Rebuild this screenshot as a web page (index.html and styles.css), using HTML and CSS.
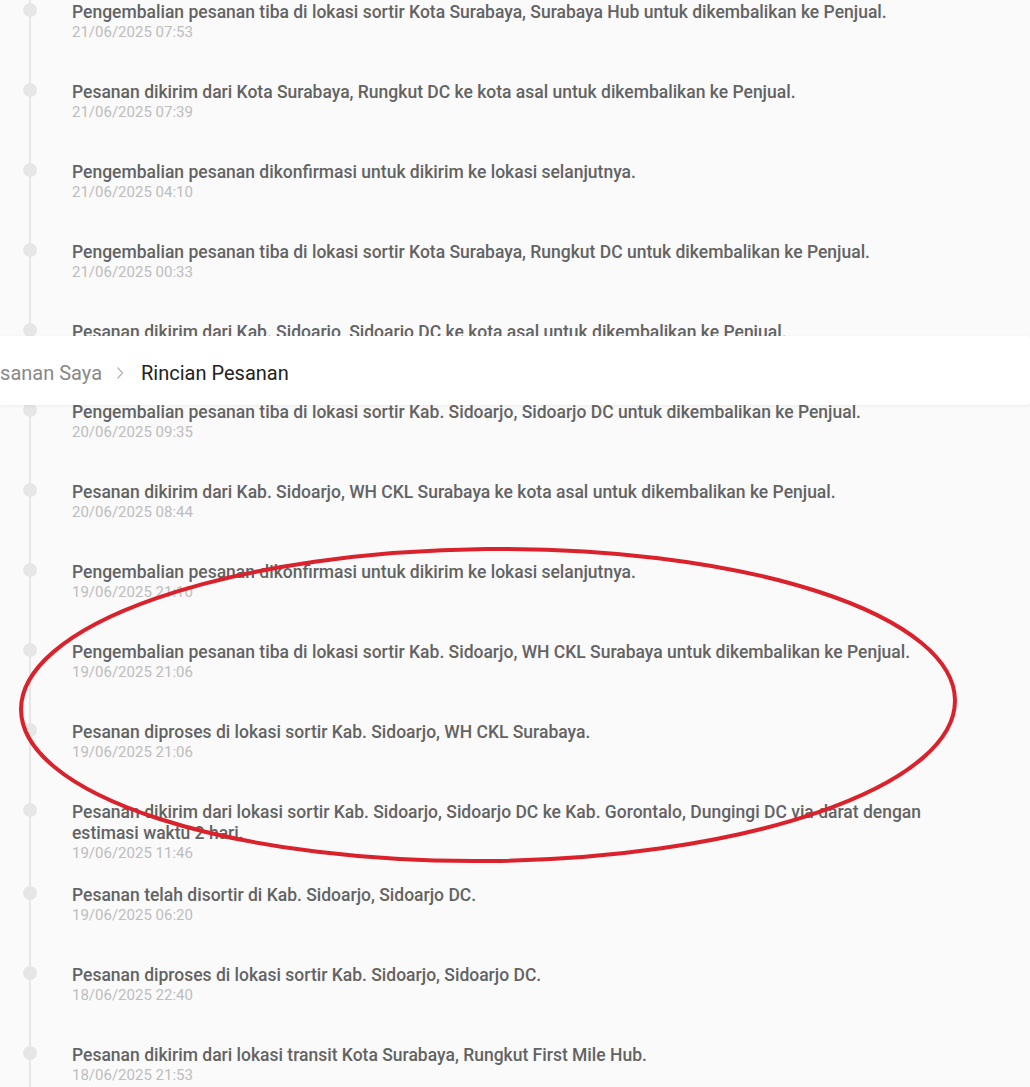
FILE: index.html
```html
<!DOCTYPE html>
<html lang="id">
<head>
<meta charset="utf-8">
<title>Rincian Pesanan</title>
<link rel="stylesheet" href="styles.css">
</head>
<body>
<div class="page">
  <ol class="timeline">
    <li class="item"><div class="marker"><span class="dot"></span></div><div class="body"><div class="title">Pengembalian pesanan tiba di lokasi sortir Kota Surabaya, Surabaya Hub untuk dikembalikan ke Penjual.</div><div class="date">21/06/2025 07:53</div></div></li>
    <li class="item"><div class="marker"><span class="dot"></span></div><div class="body"><div class="title">Pesanan dikirim dari Kota Surabaya, Rungkut DC ke kota asal untuk dikembalikan ke Penjual.</div><div class="date">21/06/2025 07:39</div></div></li>
    <li class="item"><div class="marker"><span class="dot"></span></div><div class="body"><div class="title">Pengembalian pesanan dikonfirmasi untuk dikirim ke lokasi selanjutnya.</div><div class="date">21/06/2025 04:10</div></div></li>
    <li class="item"><div class="marker"><span class="dot"></span></div><div class="body"><div class="title">Pengembalian pesanan tiba di lokasi sortir Kota Surabaya, Rungkut DC untuk dikembalikan ke Penjual.</div><div class="date">21/06/2025 00:33</div></div></li>
    <li class="item"><div class="marker"><span class="dot"></span></div><div class="body"><div class="title">Pesanan dikirim dari Kab. Sidoarjo, Sidoarjo DC ke kota asal untuk dikembalikan ke Penjual.</div><div class="date">20/06/2025 10:12</div></div></li>
    <li class="item"><div class="marker"><span class="dot"></span></div><div class="body"><div class="title">Pengembalian pesanan tiba di lokasi sortir Kab. Sidoarjo, Sidoarjo DC untuk dikembalikan ke Penjual.</div><div class="date">20/06/2025 09:35</div></div></li>
    <li class="item"><div class="marker"><span class="dot"></span></div><div class="body"><div class="title">Pesanan dikirim dari Kab. Sidoarjo, WH CKL Surabaya ke kota asal untuk dikembalikan ke Penjual.</div><div class="date">20/06/2025 08:44</div></div></li>
    <li class="item"><div class="marker"><span class="dot"></span></div><div class="body"><div class="title">Pengembalian pesanan dikonfirmasi untuk dikirim ke lokasi selanjutnya.</div><div class="date">19/06/2025 21:10</div></div></li>
    <li class="item"><div class="marker"><span class="dot"></span></div><div class="body"><div class="title">Pengembalian pesanan tiba di lokasi sortir Kab. Sidoarjo, WH CKL Surabaya untuk dikembalikan ke Penjual.</div><div class="date">19/06/2025 21:06</div></div></li>
    <li class="item"><div class="marker"><span class="dot"></span></div><div class="body"><div class="title">Pesanan diproses di lokasi sortir Kab. Sidoarjo, WH CKL Surabaya.</div><div class="date">19/06/2025 21:06</div></div></li>
    <li class="item"><div class="marker"><span class="dot"></span></div><div class="body"><div class="title">Pesanan dikirim dari lokasi sortir Kab. Sidoarjo, Sidoarjo DC ke Kab. Gorontalo, Dungingi DC via darat dengan estimasi waktu 2 hari.</div><div class="date">19/06/2025 11:46</div></div></li>
    <li class="item"><div class="marker"><span class="dot"></span></div><div class="body"><div class="title">Pesanan telah disortir di Kab. Sidoarjo, Sidoarjo DC.</div><div class="date">19/06/2025 06:20</div></div></li>
    <li class="item"><div class="marker"><span class="dot"></span></div><div class="body"><div class="title">Pesanan diproses di lokasi sortir Kab. Sidoarjo, Sidoarjo DC.</div><div class="date">18/06/2025 22:40</div></div></li>
    <li class="item"><div class="marker"><span class="dot"></span></div><div class="body"><div class="title">Pesanan dikirim dari lokasi transit Kota Surabaya, Rungkut First Mile Hub.</div><div class="date">18/06/2025 21:53</div></div></li>
  </ol>

  <nav class="crumbbar">
    <div class="crumbs">
      <span class="crumb-link">Pesanan Saya</span>
      <svg class="chev" width="8" height="14" viewBox="0 0 8 14"><path d="M1.5 1.5 L6.5 7 L1.5 12.5" fill="none" stroke="#b5b5b5" stroke-width="1.3"/></svg>
      <span class="crumb-current">Rincian Pesanan</span>
    </div>
  </nav>

  <svg class="annot" width="1030" height="1087" viewBox="0 0 1030 1087">
    <ellipse cx="488" cy="705" rx="467" ry="156" transform="rotate(-0.6 488 705)" fill="none" stroke="#d9222b" stroke-width="4"/>
  </svg>
</div>
</body>
</html>
```
FILE: styles.css
```css
html, body {
  margin: 0;
  padding: 0;
  background: #fafafa;
}
body {
  font-family: Roboto, "Liberation Sans", Arial, sans-serif;
  overflow: hidden;
}
.page {
  position: relative;
  width: 1030px;
  height: 1087px;
  overflow: hidden;
}
.timeline {
  list-style: none;
  margin: 0;
  padding: 2px 0 0 0;
  background: linear-gradient(#e6e6e6, #e6e6e6) no-repeat 29px 0 / 2px 100%;
}
.item {
  display: grid;
  grid-template-columns: 72px 1fr;
  min-height: 80px;
  padding-bottom: 23px;
  box-sizing: border-box;
}
.dot {
  display: block;
  width: 14px;
  height: 14px;
  border-radius: 50%;
  background: #e6e6e6;
  margin: 1px 0 0 23px;
}
.body {
  padding-right: 60px;
}
.title {
  font-size: 17.5px;
  font-weight: 500;
  line-height: 21px;
  color: #636363;
}
.date {
  font-size: 15px;
  line-height: 18px;
  color: #bdbdbd;
}
.crumbbar {
  position: absolute;
  left: 0;
  top: 336px;
  width: 1030px;
  height: 69px;
  box-sizing: border-box;
  padding-top: 5px;
  background: #fff;
  box-shadow: 0 1px 4px rgba(0,0,0,0.06);
  border-radius: 0 4px 4px 0;
  overflow: hidden;
  display: flex;
  align-items: center;
}
.crumbs {
  display: flex;
  align-items: center;
  margin-left: -23px;
  font-size: 20px;
}
.crumb-link {
  color: #888;
}
.chev {
  margin: 0 17px 0 14px;
}
.crumb-current {
  color: #222;
}
.annot {
  position: absolute;
  left: 0;
  top: 0;
  pointer-events: none;
}
```
